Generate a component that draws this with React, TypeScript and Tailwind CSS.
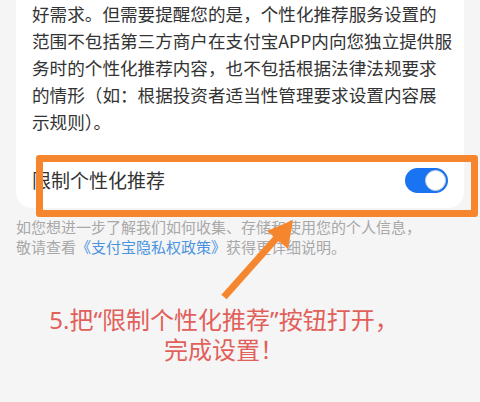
export default function App() {
  const lines = [
    "好需求。但需要提醒您的是，个性化推荐服务设置的",
    "范围不包括第三方商户在支付宝APP内向您独立提供服",
    "务时的个性化推荐内容，也不包括根据法律法规要求",
    "的情形（如：根据投资者适当性管理要求设置内容展",
    "示规则）。",
  ];
  return (
    <div
      className="relative w-[480px] h-[402px] overflow-hidden bg-[#f5f5f6]"
      style={{ fontFamily: '"Noto Sans CJK SC", "Noto Sans", sans-serif' }}
    >
      <div className="mx-4 bg-white rounded-b-2xl">
        <div className="px-4 text-[17.6px] leading-[27px] text-[#333] whitespace-nowrap">
          {lines.map((l) => (
            <div key={l}>{l}</div>
          ))}
        </div>
        <div className="mt-[17px] h-[56px] pl-4 pr-4 flex items-center justify-between">
          <span className="text-[19px] text-[#333]">限制个性化推荐</span>
          <div className="w-[43px] h-[25px] rounded-full bg-[#1a73f0] flex items-center justify-end pr-[2px]">
            <div className="w-[21px] h-[21px] rounded-full bg-white border border-[#c9d3e0]" />
          </div>
        </div>
      </div>

      <div className="mt-[9px] px-4 text-[15px] leading-[20px] text-[#a8a8a8] whitespace-nowrap">
        <div>如您想进一步了解我们如何收集、存储和使用您的个人信息，</div>
        <div>
          敬请查看<span className="text-[#4a93df]">《支付宝隐私权政策》</span>获得更详细说明。
        </div>
      </div>

      <div
        className="mt-[48px] w-[448px] text-center text-[24px] leading-[30px] text-[#e2605a]"
        style={{ fontFamily: '"Noto Sans", "Noto Sans CJK SC", sans-serif' }}
      >
        <div>5.把“限制个性化推荐”按钮打开，</div>
        <div>完成设置！</div>
      </div>

      <div className="absolute left-[36px] top-[155px] w-[442px] h-[62px] border-[7px] border-[#f5862e] rounded-[3px]" />

      <svg className="absolute left-0 top-0" width="480" height="402">
        <line x1="224" y1="297" x2="281" y2="233" stroke="#f5862e" strokeWidth="7" />
        <polygon points="293,220 267,231 288,249" fill="#f5862e" />
      </svg>
    </div>
  );
}
